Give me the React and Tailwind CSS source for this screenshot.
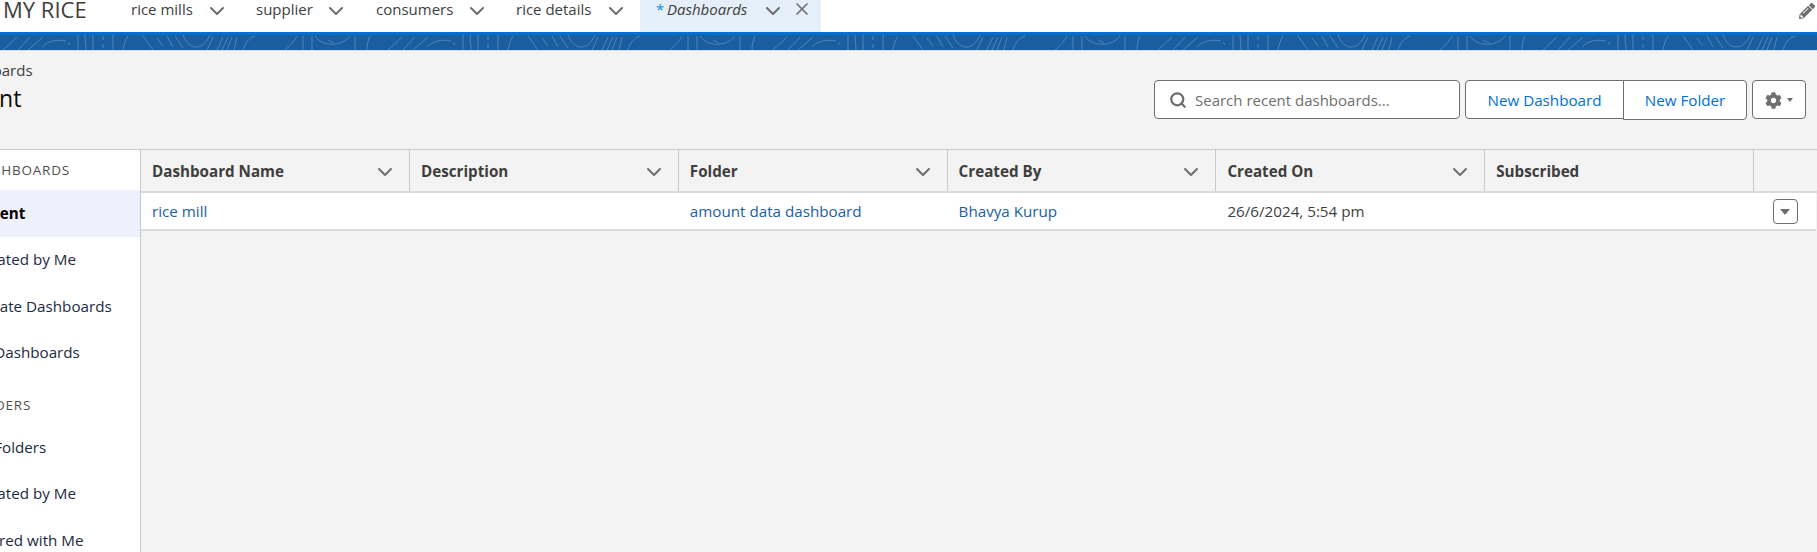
import React from 'react'
import { ChevronDown, X, Search } from 'lucide-react'
import { FaCog, FaPencilAlt } from 'react-icons/fa'

const navTabs = [
  { label: 'rice mills', w: 'w-[125px]', mr: 'mr-[27px]' },
  { label: 'supplier', w: 'w-[120px]', mr: 'mr-[28px]' },
  { label: 'consumers', w: 'w-[140px]', mr: 'mr-[27px]' },
  { label: 'rice details', w: 'w-[124px]', mr: 'mr-[12px]' }
]

const columns = ['Dashboard Name', 'Description', 'Folder', 'Created By', 'Created On', 'Subscribed']

// Band texture under the nav bar
const BandPattern = () => (
  <svg className="block h-[15px] w-full" aria-hidden="true">
    <defs>
      <pattern id="band" width="385" height="15" patternUnits="userSpaceOnUse">
        <g fill="none" stroke="#4d84b6" strokeWidth="1">
          <path d="M3 15 L17 2 M18 15 L30 2 M28 15 L43 2" />
          <path d="M42 12 C48 6 56 4 66 6 M68 7 L70 10" />
          <path d="M78 0 L78 15 M85 0 L86 15 M93 0 L93 15 M103 1 L103 5 M103 9 L103 13 M113 0 L113 15" />
          <path d="M123 15 C124 9 126 4 128 1 M143 1 L153 15 M157 3 L163 11 M167 1 L173 12 M175 1 L183 13" />
          <path d="M183 0 C188 14 202 18 210 0" />
          <path d="M207 15 L213 2 M217 15 L223 2 M222 15 L228 2 M227 15 L232 2 M234 15 L237 2" />
          <path d="M243 15 C245 8 249 3 255 1" />
          <path d="M285 15 C291 10 295 5 297 1 M303 15 L303 1 M312 15 L312 1" />
          <path d="M315 1 C322 12 342 12 350 1 M328 5 L334 8" />
          <path d="M355 1 L355 15 M367 15 C367 10 368 5 370 1" />
        </g>
      </pattern>
    </defs>
    <rect width="100%" height="15" fill="#1b5e9f" />
    <rect width="100%" height="15" fill="url(#band)" />
  </svg>
)

const SideItem = ({ label, active }) => (
  <div className={`flex h-[46.5px] items-center text-[15.2px] ${active ? 'bg-[#eef1fb] font-bold text-black' : 'text-[#1b2a40]'}`}>
    <span className="whitespace-nowrap">{label}</span>
  </div>
)

const SideHeading = ({ label, className = '' }) => (
  <div className={`whitespace-nowrap text-[13.5px] tracking-[0.8px] text-[#514f4d] ${className}`}>{label}</div>
)

export default function App() {
  return (
    <div
      className="h-[552px] w-[1817px] overflow-hidden bg-[#f3f3f3]"
      style={{ fontFamily: '"Open Sans", "Noto Sans", sans-serif' }}
    >
      {/* Nav bar */}
      <div className="flex h-[32px] items-start bg-white">
        <div className="w-[131px] pl-[3px] text-[22px] leading-[19px] text-[#3e3e3c]">MY RICE</div>
        {navTabs.map((tab) => (
          <div key={tab.label} className={`flex h-[32px] items-start ${tab.w}`}>
            <span className="text-[15px] leading-[19px] text-[#3e3e3c]">{tab.label}</span>
            <ChevronDown className={`ml-auto -mt-[1px] h-[24px] w-[24px] text-[#706e6b] ${tab.mr}`} strokeWidth={2} />
          </div>
        ))}
        <div className="flex h-[32px] w-[181px] items-start bg-[#e5eff9] pl-[16px]">
          <span className="w-[11px] text-[15px] leading-[19px] text-[#1589ee]">*</span>
          <span className="w-[94px] text-[15px] italic leading-[19px] text-[#3e3e3c]">Dashboards</span>
          <ChevronDown className="-mt-[1px] h-[24px] w-[24px] text-[#706e6b]" strokeWidth={2} />
          <X className="-mt-[1px] ml-[7px] h-[20px] w-[20px] text-[#706e6b]" strokeWidth={2} />
        </div>
        <FaPencilAlt className="ml-auto mr-[2px] mt-[3px] h-[16px] w-[16px] text-[#706e6b]" />
      </div>
      <div className="h-[3px] bg-[#0070d2]" />
      <BandPattern />

      {/* Page header */}
      <div className="flex h-[99px] items-start justify-between border-t border-[#dddbda] pr-[11px]">
        <div className="-ml-[52px] pt-[9px]">
          <div className="text-[15px] leading-[20px] text-[#3e3e3c]">Dashboards</div>
          <div className="mt-[3px] text-[23px] leading-[30px] text-[#080707]">Recent</div>
        </div>
        <div className="mt-[29px] flex items-start">
          <div className="flex h-[39px] w-[306px] items-center rounded border border-[#706e6b] bg-white pl-[14px] pt-px">
            <Search className="h-[18px] w-[18px] text-[#706e6b]" strokeWidth={3} />
            <span className="ml-[8px] text-[15px] text-[#706e6b]">Search recent dashboards...</span>
          </div>
          <div className="ml-[5px] flex h-[39px] w-[159px] items-center justify-center rounded-l border border-[#706e6b] bg-white pt-px text-[15.2px] text-[#0070d2]">
            New Dashboard
          </div>
          <div className="-ml-px flex h-[40px] w-[124px] items-center justify-center rounded-r border border-[#706e6b] bg-white text-[15.2px] text-[#0070d2]">
            New Folder
          </div>
          <div className="ml-[5px] flex h-[39px] w-[54px] items-center justify-center gap-[5px] rounded border border-[#706e6b] bg-white pt-px">
            <FaCog className="h-[17px] w-[17px] text-[#706e6b]" />
            <span className="h-0 w-0 border-x-[3.5px] border-t-[4px] border-x-transparent border-t-[#706e6b]" />
          </div>
        </div>
      </div>

      {/* Body */}
      <div className="flex h-[403px] border-t border-[#c9c9c9]">
        <div className="w-[141px] shrink-0 overflow-hidden border-r border-[#c9c9c9] bg-white">
          <div className="-ml-[27px]">
            <SideHeading label="DASHBOARDS" className="flex h-[40px] items-center" />
            <SideItem label="Recent" active />
            <SideItem label="Created by Me" />
            <SideItem label="Private Dashboards" />
            <SideItem label="All Dashboards" />
            <SideHeading label="FOLDERS" className="-ml-[5px] flex h-[44px] items-end pb-[5px]" />
            <div className="h-[4px]" />
            <SideItem label="All Folders" />
            <SideItem label="Created by Me" />
            <SideItem label="Shared with Me" />
          </div>
        </div>

        <div className="min-w-0 flex-1">
          <div className="grid h-[43px] grid-cols-[269px_268.8px_268.8px_268.8px_268.8px_268.8px_1fr] border-b-2 border-[#dddbda]">
            {columns.map((col, i) => (
              <div key={col} className="flex h-[41px] items-center border-r border-[#c9c9c9] pl-[11px] pr-[12px] pt-[2px]">
                <span className="whitespace-nowrap text-[15.2px] font-bold text-[#3e3e3c]">{col}</span>
                {i < 5 && <ChevronDown className="ml-auto h-[24px] w-[24px] text-[#706e6b]" strokeWidth={2} />}
              </div>
            ))}
            <div className="h-[41px]" />
          </div>
          <div className="mr-px grid h-[38px] grid-cols-[269px_268.8px_268.8px_268.8px_268.8px_268.8px_1fr] items-center border-b-2 border-[#dddbda] bg-white pt-px text-[15.2px]">
            <a className="pl-[11px] text-[#1b5e9f]">rice mill</a>
            <span />
            <a className="pl-[11px] text-[#1b5e9f]">amount data dashboard</a>
            <a className="pl-[11px] text-[#1b5e9f]">Bhavya Kurup</a>
            <span className="pl-[11px] text-[#3e3e3c]">26/6/2024, 5:54 pm</span>
            <span />
            <div className="flex justify-center pl-[1px]">
              <div className="flex h-[25px] w-[25px] items-center justify-center rounded border border-[#706e6b] bg-white">
                <span className="h-0 w-0 border-x-[5px] border-t-[6px] border-x-transparent border-t-[#706e6b]" />
              </div>
            </div>
          </div>
        </div>
      </div>
    </div>
  )
}
